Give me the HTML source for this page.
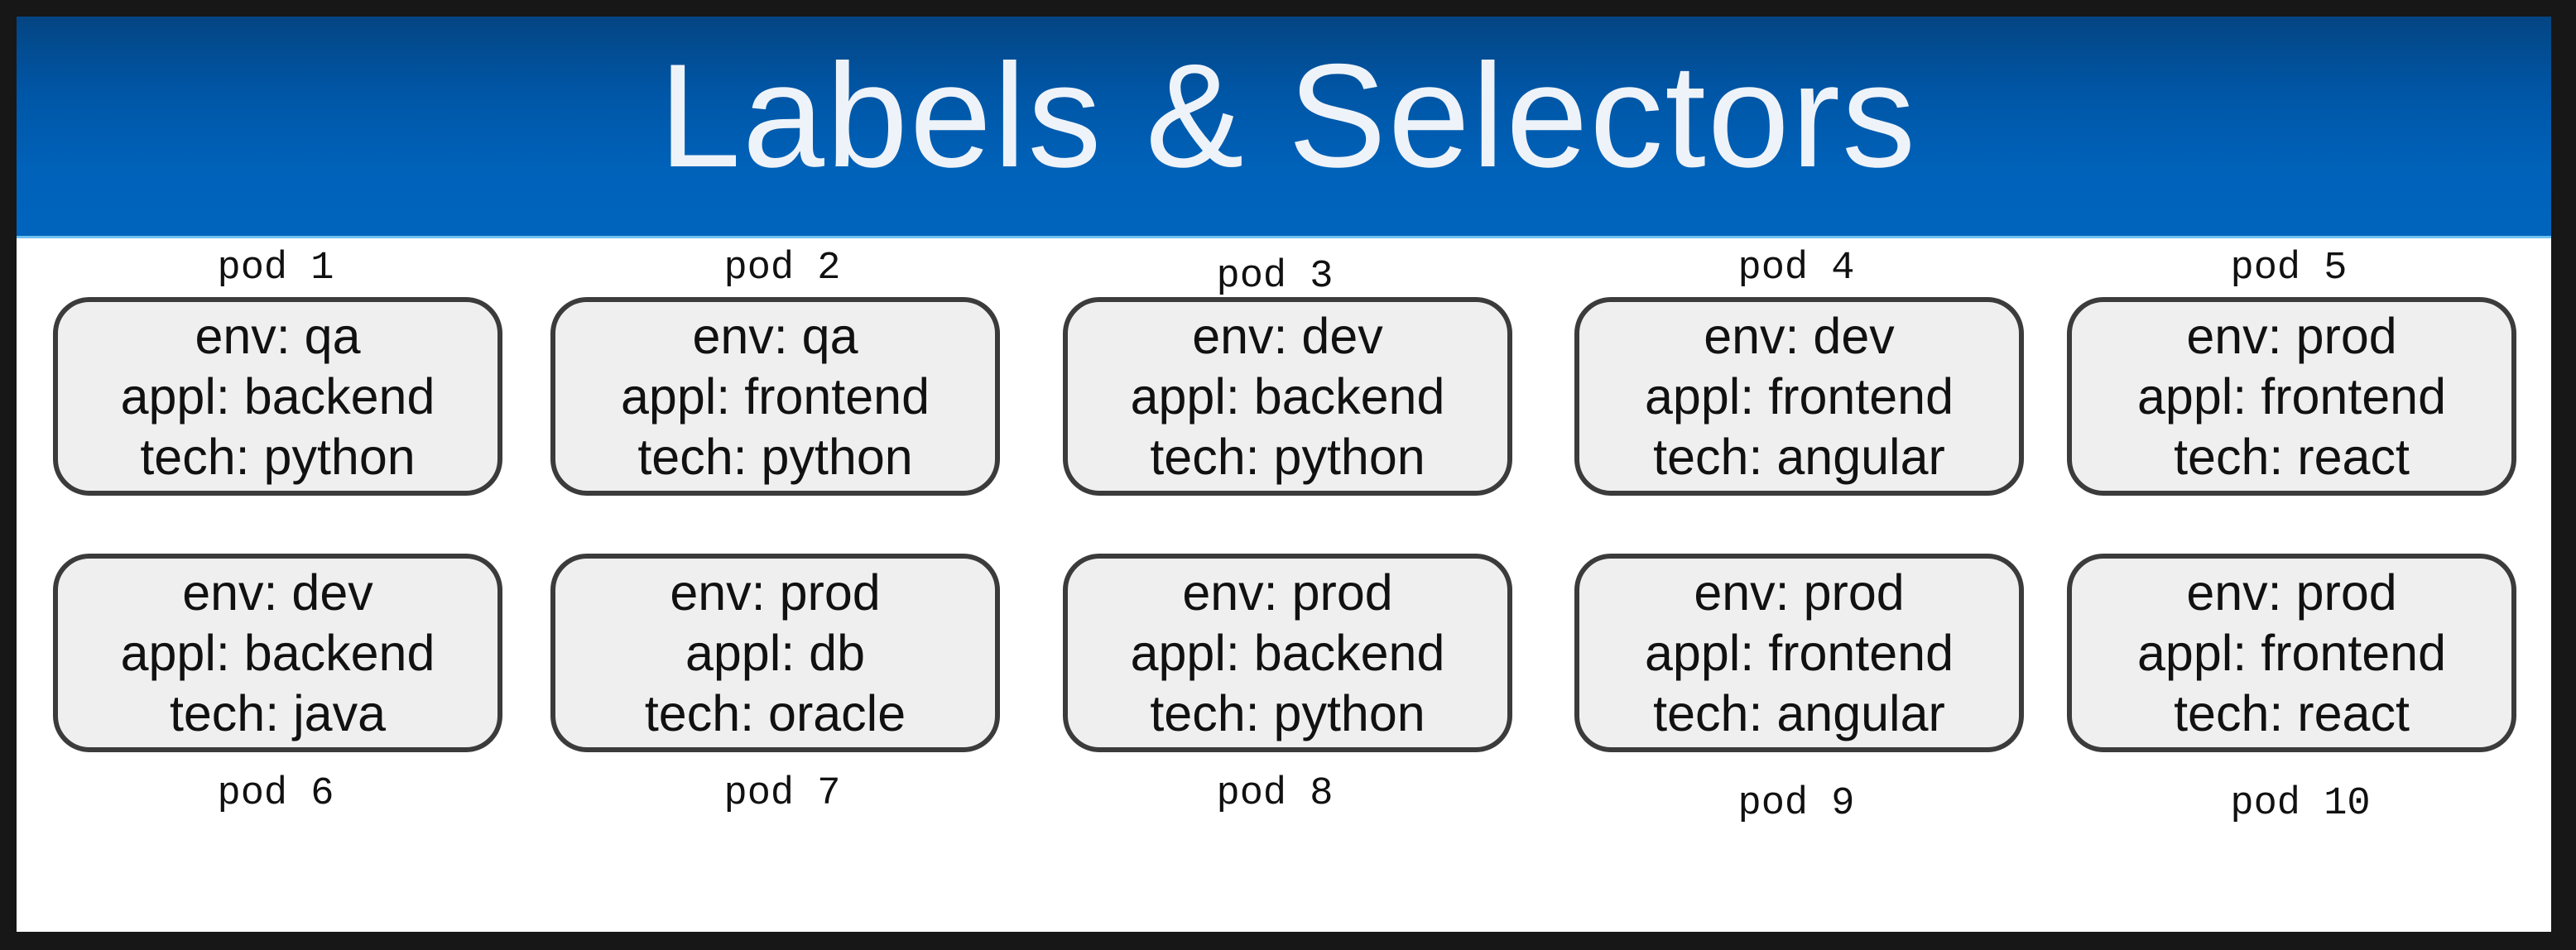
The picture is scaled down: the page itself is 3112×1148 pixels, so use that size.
<!DOCTYPE html>
<html><head><meta charset="utf-8"><style>
html,body{margin:0;padding:0}
body{width:3112px;height:1148px;background:#171717;position:relative;overflow:hidden;font-family:"Liberation Sans",sans-serif}
.white{position:absolute;left:20px;top:20px;width:3062px;height:1106px;background:#fff}
.blue{position:absolute;left:20px;top:20px;width:3062px;height:268px;background:linear-gradient(#044583 0%,#0056a6 35%,#0062b9 70%,#0064bd 100%);border-bottom:3px solid #6fc2f0;box-sizing:border-box}
.title{position:absolute;left:0;width:3112px;top:45px;text-align:center;color:#eef3f9;font-size:178px;line-height:190px;letter-spacing:2px;font-weight:normal}
.box{position:absolute;width:543px;height:240px;border:6px solid #3b3b3b;border-radius:44px;background:#efefef;box-sizing:border-box;text-align:center;color:#111;font-size:61px;line-height:73px;padding-top:5px}
.pod{position:absolute;width:400px;margin-left:-200px;text-align:center;font-family:"Liberation Mono",monospace;font-size:47px;line-height:50px;color:#111}
</style></head><body>
<div class="white"></div>
<div class="blue"></div>
<div class="title">Labels &amp; Selectors</div>

<div class="pod" style="left:333px;top:300px">pod 1</div>
<div class="pod" style="left:945px;top:300px">pod 2</div>
<div class="pod" style="left:1540px;top:310px">pod 3</div>
<div class="pod" style="left:2170px;top:300px">pod 4</div>
<div class="pod" style="left:2765px;top:300px">pod 5</div>

<div class="box" style="left:64px;top:359px">env: qa<br>appl: backend<br>tech: python</div>
<div class="box" style="left:665px;top:359px">env: qa<br>appl: frontend<br>tech: python</div>
<div class="box" style="left:1284px;top:359px">env: dev<br>appl: backend<br>tech: python</div>
<div class="box" style="left:1902px;top:359px">env: dev<br>appl: frontend<br>tech: angular</div>
<div class="box" style="left:2497px;top:359px">env: prod<br>appl: frontend<br>tech: react</div>

<div class="box" style="left:64px;top:669px">env: dev<br>appl: backend<br>tech: java</div>
<div class="box" style="left:665px;top:669px">env: prod<br>appl: db<br>tech: oracle</div>
<div class="box" style="left:1284px;top:669px">env: prod<br>appl: backend<br>tech: python</div>
<div class="box" style="left:1902px;top:669px">env: prod<br>appl: frontend<br>tech: angular</div>
<div class="box" style="left:2497px;top:669px">env: prod<br>appl: frontend<br>tech: react</div>

<div class="pod" style="left:333px;top:935px">pod 6</div>
<div class="pod" style="left:945px;top:935px">pod 7</div>
<div class="pod" style="left:1540px;top:935px">pod 8</div>
<div class="pod" style="left:2170px;top:947px">pod 9</div>
<div class="pod" style="left:2779px;top:947px">pod 10</div>
</body></html>
